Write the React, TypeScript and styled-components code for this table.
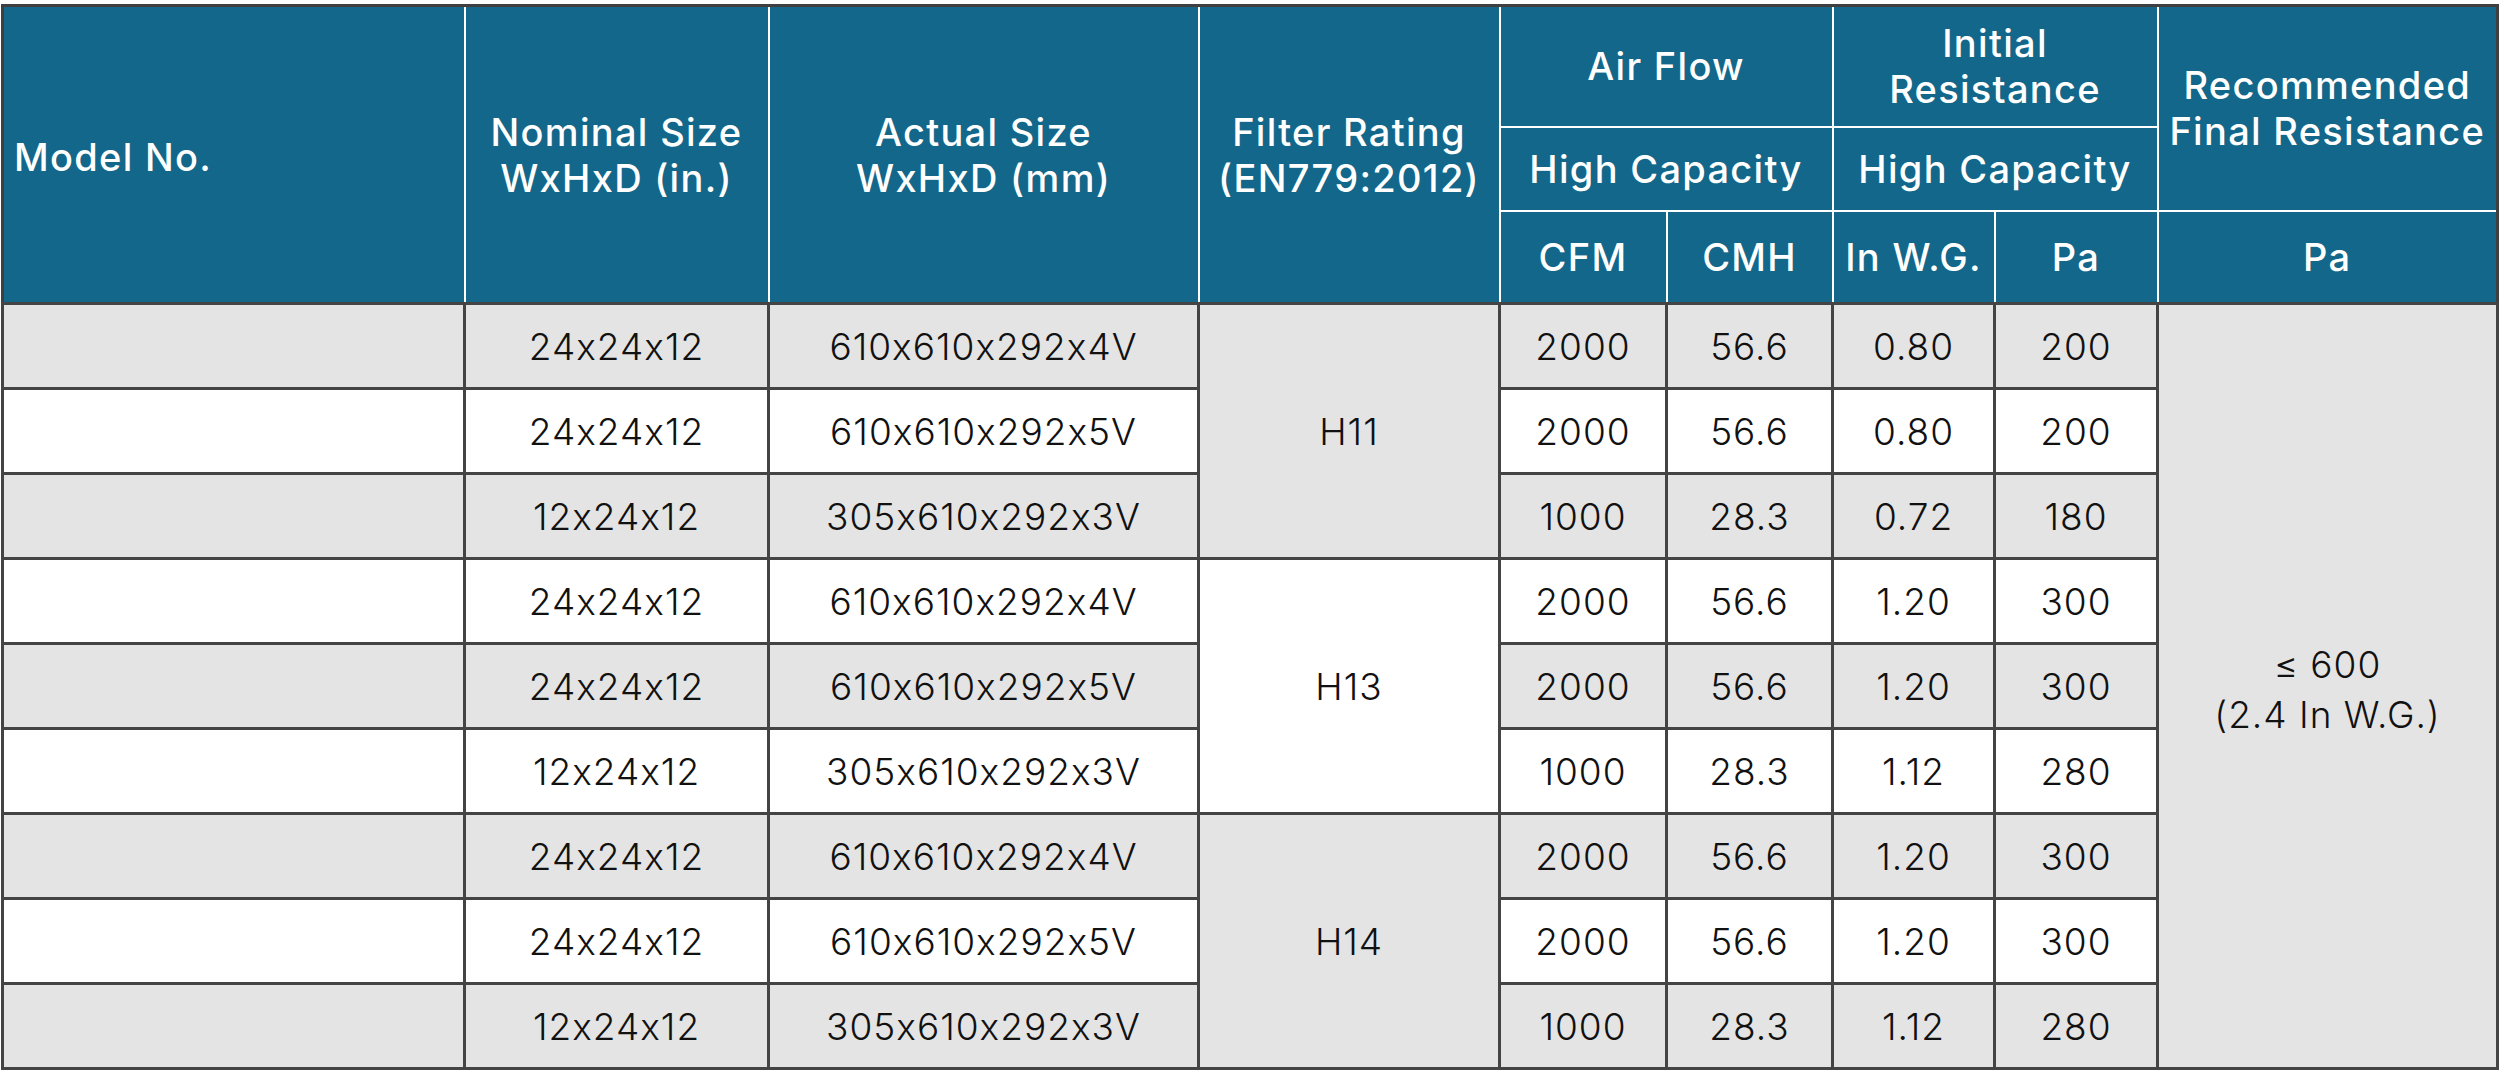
import React from 'react';
import styled, { createGlobalStyle } from 'styled-components';

type Row = {
  nominal: string;
  actual: string;
  cfm: string;
  cmh: string;
  wg: string;
  pa: string;
};

const groups: { rating: string; rows: Row[] }[] = [
  {
    rating: 'H11',
    rows: [
      { nominal: '24x24x12', actual: '610x610x292x4V', cfm: '2000', cmh: '56.6', wg: '0.80', pa: '200' },
      { nominal: '24x24x12', actual: '610x610x292x5V', cfm: '2000', cmh: '56.6', wg: '0.80', pa: '200' },
      { nominal: '12x24x12', actual: '305x610x292x3V', cfm: '1000', cmh: '28.3', wg: '0.72', pa: '180' },
    ],
  },
  {
    rating: 'H13',
    rows: [
      { nominal: '24x24x12', actual: '610x610x292x4V', cfm: '2000', cmh: '56.6', wg: '1.20', pa: '300' },
      { nominal: '24x24x12', actual: '610x610x292x5V', cfm: '2000', cmh: '56.6', wg: '1.20', pa: '300' },
      { nominal: '12x24x12', actual: '305x610x292x3V', cfm: '1000', cmh: '28.3', wg: '1.12', pa: '280' },
    ],
  },
  {
    rating: 'H14',
    rows: [
      { nominal: '24x24x12', actual: '610x610x292x4V', cfm: '2000', cmh: '56.6', wg: '1.20', pa: '300' },
      { nominal: '24x24x12', actual: '610x610x292x5V', cfm: '2000', cmh: '56.6', wg: '1.20', pa: '300' },
      { nominal: '12x24x12', actual: '305x610x292x3V', cfm: '1000', cmh: '28.3', wg: '1.12', pa: '280' },
    ],
  },
];

const colWidths = [462, 304, 430, 301, 167, 166, 162, 163, 340];

const App = () => {
  let rowIndex = 0;
  return (
    <Page>
      <GlobalStyle />
      <SpecTable>
        <colgroup>
          {colWidths.map((w, i) => (
            <col key={i} style={{ width: w }} />
          ))}
        </colgroup>
        <thead>
          <HeadRow $h={121}>
            <HeadCell rowSpan={3} $align="left">Model No.</HeadCell>
            <HeadCell rowSpan={3}>
              Nominal Size
              <br />
              WxHxD (in.)
            </HeadCell>
            <HeadCell rowSpan={3}>
              Actual Size
              <br />
              WxHxD (mm)
            </HeadCell>
            <HeadCell rowSpan={3}>
              Filter Rating
              <br />
              (EN779:2012)
            </HeadCell>
            <HeadCell colSpan={2}>Air Flow</HeadCell>
            <HeadCell colSpan={2}>
              Initial
              <br />
              Resistance
            </HeadCell>
            <HeadCell rowSpan={2}>
              Recommended
              <br />
              Final Resistance
            </HeadCell>
          </HeadRow>
          <HeadRow $h={84}>
            <HeadCell colSpan={2}>High Capacity</HeadCell>
            <HeadCell colSpan={2}>High Capacity</HeadCell>
          </HeadRow>
          <HeadRow $h={93}>
            <HeadCell>CFM</HeadCell>
            <HeadCell>CMH</HeadCell>
            <HeadCell>In W.G.</HeadCell>
            <HeadCell>Pa</HeadCell>
            <HeadCell>Pa</HeadCell>
          </HeadRow>
        </thead>
        <tbody>
          {groups.map((g, gi) =>
            g.rows.map((r, ri) => {
              const shaded = rowIndex % 2 === 0;
              const first = rowIndex === 0;
              rowIndex += 1;
              return (
                <BodyRow key={`${gi}-${ri}`}>
                  <BodyCell $shaded={shaded} />
                  <BodyCell $shaded={shaded}>{r.nominal}</BodyCell>
                  <BodyCell $shaded={shaded}>{r.actual}</BodyCell>
                  {ri === 0 && (
                    <BodyCell rowSpan={3} $shaded={gi % 2 === 0}>
                      {g.rating}
                    </BodyCell>
                  )}
                  <BodyCell $shaded={shaded}>{r.cfm}</BodyCell>
                  <BodyCell $shaded={shaded}>{r.cmh}</BodyCell>
                  <BodyCell $shaded={shaded}>{r.wg}</BodyCell>
                  <BodyCell $shaded={shaded}>{r.pa}</BodyCell>
                  {first && (
                    <BodyCell rowSpan={9} $shaded>
                      <FinalValue>
                        ≤ 600
                        <br />
                        (2.4 In W.G.)
                      </FinalValue>
                    </BodyCell>
                  )}
                </BodyRow>
              );
            })
          )}
        </tbody>
      </SpecTable>
    </Page>
  );
};

export default App;

const GlobalStyle = createGlobalStyle`
  html, body {
    margin: 0;
    padding: 0;
    background: #ffffff;
  }
`;

const Page = styled.div`
  padding: 4px 0 0 1px;
  font-family: Inter, 'Noto Sans', 'Liberation Sans', sans-serif;
  font-feature-settings: 'calt' 0;
`;

const SpecTable = styled.table`
  width: 2497px;
  table-layout: fixed;
  border-collapse: collapse;
  border: 3px solid #3f3f3f;
`;

const HeadRow = styled.tr<{ $h: number }>`
  height: ${(p) => p.$h}px;
`;

const HeadCell = styled.th<{ $align?: 'left' | 'center' }>`
  background: #13678a;
  color: #ffffff;
  font-size: 38px;
  font-weight: 500;
  letter-spacing: 1.3px;
  line-height: 46px;
  text-align: ${(p) => p.$align ?? 'center'};
  vertical-align: middle;
  padding: 0 ${(p) => (p.$align === 'left' ? '10px' : '0')};
  padding-top: ${(p) => (p.$align === 'left' ? '4px' : '0')};
  border: 2px solid #ffffff;
  white-space: nowrap;
`;

const BodyRow = styled.tr`
  height: 85px;
`;

const BodyCell = styled.td<{ $shaded?: boolean }>`
  background: ${(p) => (p.$shaded ? '#e4e4e4' : '#ffffff')};
  color: #111111;
  font-size: 37px;
  font-weight: 300;
  letter-spacing: 1px;
  text-align: center;
  vertical-align: middle;
  padding: 0;
  border: 3px solid #444444;
  white-space: nowrap;
`;

const FinalValue = styled.div`
  line-height: 50px;
  margin-top: 8px;
`;
